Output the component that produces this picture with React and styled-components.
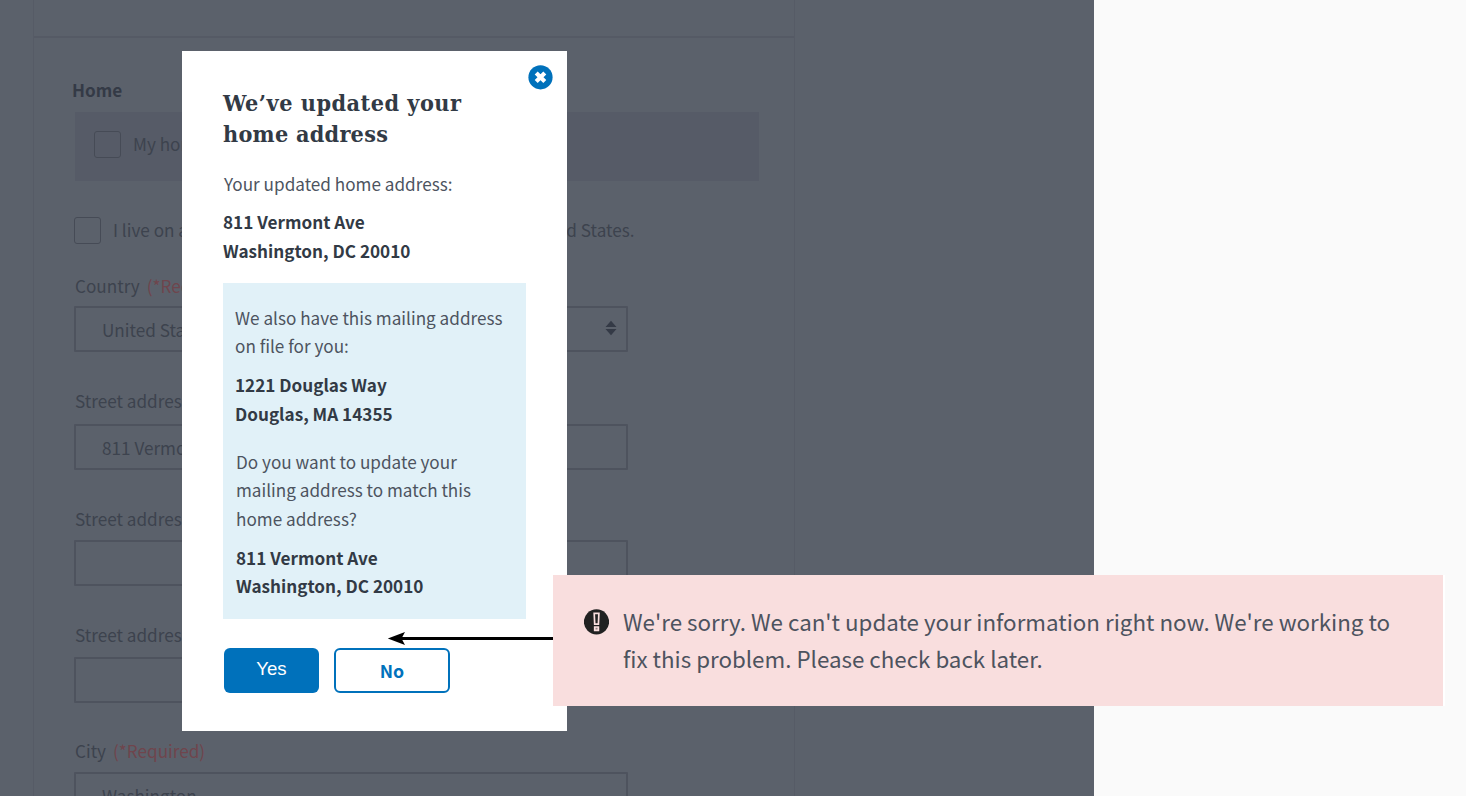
import React from "react";
import styled, { createGlobalStyle } from "styled-components";

const sans = `"Noto Sans CJK SC", "Noto Sans CJK JP", "Noto Sans", sans-serif`;

const Global = createGlobalStyle`
  * { box-sizing: border-box; }
  body { margin: 0; background: #fafafa; font-family: ${sans}; overflow: hidden; }
  p, h1, h2 { margin: 0; }
`;

const Canvas = styled.div`
  position: relative;
  width: 1466px;
  height: 796px;
  overflow: hidden;
`;

const Page = styled.div`
  width: 1094px;
  height: 796px;
  padding: 0 0 0 33px;
  background: #5b616b;
  overflow: hidden;
`;

const Panel = styled.section`
  width: 762px;
  height: 900px;
  border: solid #565b66;
  border-width: 0 1px;
`;

const PanelTop = styled.div`
  height: 38px;
  border-bottom: 2px solid #555a65;
`;

const Form = styled.div`
  display: flex;
  flex-direction: column;
  padding: 38px 0 0 40px;
  color: #3d434e;
`;

const Line = styled.span`
  display: block;
  white-space: nowrap;
  font-size: 17.15px;
  line-height: 28px;
`;

const FormTitle = styled(Line).attrs({ as: "h2" })`
  margin-left: -2px;
  font-weight: 700;
  color: #343a46;
`;

const CheckRow = styled.div`
  display: flex;
  align-items: center;
  gap: 12px;
  ${Line} { margin-top: -1px; }
`;

const Highlight = styled(CheckRow)`
  width: 684px;
  height: 69px;
  margin: 8px 0 0 1px;
  padding: 0 0 4px 19px;
  background: #565b67;
`;

const MilitaryRow = styled(CheckRow)`
  height: 27px;
  margin-top: 36px;
`;

const Checkbox = styled.span`
  flex: none;
  width: 27px;
  height: 27px;
  border: 1px solid #464b56;
  border-radius: 3px;
`;

const Label = styled(Line)`
  margin: ${(p) => p.$top}px 0 0 1px;
`;

const Required = styled.span`
  margin-left: 7px;
  color: #6f454d;
`;

const Field = styled.div`
  display: flex;
  align-items: center;
  justify-content: space-between;
  width: 554px;
  height: 46px;
  margin-top: ${(p) => p.$top}px;
  padding: 2px 9px 0 26px;
  border: 2px solid #4e535e;
  border-radius: 1px;
  svg { margin-top: -5px; }
`;

const Modal = styled.div`
  position: absolute;
  left: 182px;
  top: 51px;
  width: 385px;
  height: 680px;
  padding: 36px 41px 0;
  background: #fff;
  color: #4d545f;
`;

const CloseButton = styled.button`
  position: absolute;
  right: 14px;
  top: 14px;
  width: 25px;
  height: 25px;
  padding: 0;
  border: 0;
  background: none;
  svg { display: block; }
`;

const Title = styled.h1`
  font-family: "DejaVu Serif Condensed", "DejaVu Serif", serif;
  font-stretch: condensed;
  font-size: 23.2px;
  line-height: 31px;
  font-weight: 700;
  color: #323a45;
  white-space: nowrap;
`;

const TitleLine = styled.span`
  display: block;
  letter-spacing: ${(p) => p.$track}px;
`;

const Text = styled.p`
  margin: ${(p) => p.$top || 0}px 0 0 ${(p) => p.$left || 0}px;
  font-size: 17.15px;
  line-height: 28.8px;
  white-space: nowrap;
`;

const Address = styled(Text)`
  font-weight: 700;
  color: #323a45;
`;

const Info = styled.div`
  width: 303px;
  height: 336px;
  margin-top: 17.4px;
  padding: 20.6px 12px 0;
  background: #e1f1f8;
`;

const Actions = styled.div`
  display: flex;
  gap: 15px;
  margin: 29px 0 0 1px;
`;

const Button = styled.button`
  width: ${(p) => (p.$primary ? 95 : 116)}px;
  height: 45px;
  padding: ${(p) => (p.$primary ? "0 0 2px" : "0 0 1px")};
  border: ${(p) => (p.$primary ? "0" : "2px solid #0071bb")};
  border-radius: 6px;
  background: ${(p) => (p.$primary ? "#0071bb" : "#fff")};
  color: ${(p) => (p.$primary ? "#fff" : "#0071bb")};
  font: ${(p) => (p.$primary ? `400 18.6px "Liberation Sans", sans-serif` : `700 17.8px ${sans}`)};
  line-height: 24px;
`;

const Arrow = styled.svg`
  position: absolute;
  left: 387px;
  top: 630px;
`;

const Alert = styled.div`
  position: absolute;
  left: 553px;
  top: 575px;
  width: 890px;
  height: 131px;
  display: flex;
  gap: 14px;
  padding: 28px 0 0 31px;
  background: #f9dede;
  box-shadow: 2px 0 0 #fff;
  color: #4d535e;
  svg { flex: none; margin-top: 6px; }
`;

const AlertText = styled.p`
  font-size: 22.35px;
  line-height: 37.4px;
  white-space: nowrap;
`;

const AlertLine = styled.span`
  display: block;
`;

export default function App() {
  return (
    <Canvas>
      <Global />
      <Page>
        <Panel>
          <PanelTop />
          <Form>
            <FormTitle>Home</FormTitle>
            <Highlight>
              <Checkbox />
              <Line>My home address</Line>
            </Highlight>
            <MilitaryRow>
              <Checkbox />
              <Line>I live on a United States military base outside of the United States.</Line>
            </MilitaryRow>
            <Label $top={28}>Country<Required>(*Required)</Required></Label>
            <Field $top={6}>
              <Line>United States</Line>
              <svg width="12" height="16" viewBox="0 0 12 16" fill="#343a46">
                <path d="M0.5 7 6 0.8 11.5 7ZM0.5 9H11.5L6 15.2Z" />
              </svg>
            </Field>
            <Label $top={35}>Street address</Label>
            <Field $top={9}><Line>811 Vermont Ave</Line></Field>
            <Label $top={35}>Street address</Label>
            <Field $top={7} />
            <Label $top={35}>Street address</Label>
            <Field $top={8} />
            <Label $top={34}>City<Required>(*Required)</Required></Label>
            <Field $top={7}><Line>Washington</Line></Field>
          </Form>
        </Panel>
      </Page>

      <Modal>
        <CloseButton aria-label="Close">
          <svg width="25" height="25" viewBox="0 0 25 25">
            <circle cx="12.5" cy="12.3" r="12.1" fill="#0071bb" />
            <path d="M8.2 8 16.8 16.6M16.8 8 8.2 16.6" stroke="#fff" strokeWidth="4.2" />
          </svg>
        </CloseButton>
        <Title>
          <TitleLine $track={0.5}>We’ve updated your</TitleLine>
          <TitleLine $track={0.25}>home address</TitleLine>
        </Title>
        <Text $top={20.6} $left={1}>Your updated home address:</Text>
        <Address $top={9.6}>811 Vermont Ave<br />Washington, DC 20010</Address>
        <Info>
          <Text>We also have this mailing address<br />on file for you:</Text>
          <Address $top={9.6}>1221 Douglas Way<br />Douglas, MA 14355</Address>
          <Text $top={19.2} $left={1}>Do you want to update your<br />mailing address to match this<br />home address?</Text>
          <Address $top={9.6} $left={1}>811 Vermont Ave<br />Washington, DC 20010</Address>
        </Info>
        <Actions>
          <Button $primary>Yes</Button>
          <Button>No</Button>
        </Actions>
      </Modal>

      <Arrow width="166" height="17" viewBox="0 0 166 17">
        <path d="M13 8.5H166" stroke="#000" strokeWidth="3.2" />
        <path d="M0.8 8.5 18 2 14.5 8.5 18 15Z" />
      </Arrow>

      <Alert role="alert">
        <svg width="25" height="26" viewBox="0 0 25 26">
          <circle cx="12.5" cy="12.8" r="12.6" fill="#212121" />
          <path d="M10.2 4.4H14.9L14.4 15.2H10.7Z" fill="none" stroke="#f9dede" strokeWidth="1.7" />
          <path d="M10.7 18H14.4V21.3H10.7Z" fill="#8f8282" stroke="#f9dede" strokeWidth="1.7" />
        </svg>
        <AlertText>
          <AlertLine>We're sorry. We can't update your information right now. We're working to</AlertLine>
          <AlertLine>fix this problem. Please check back later.</AlertLine>
        </AlertText>
      </Alert>
    </Canvas>
  );
}
